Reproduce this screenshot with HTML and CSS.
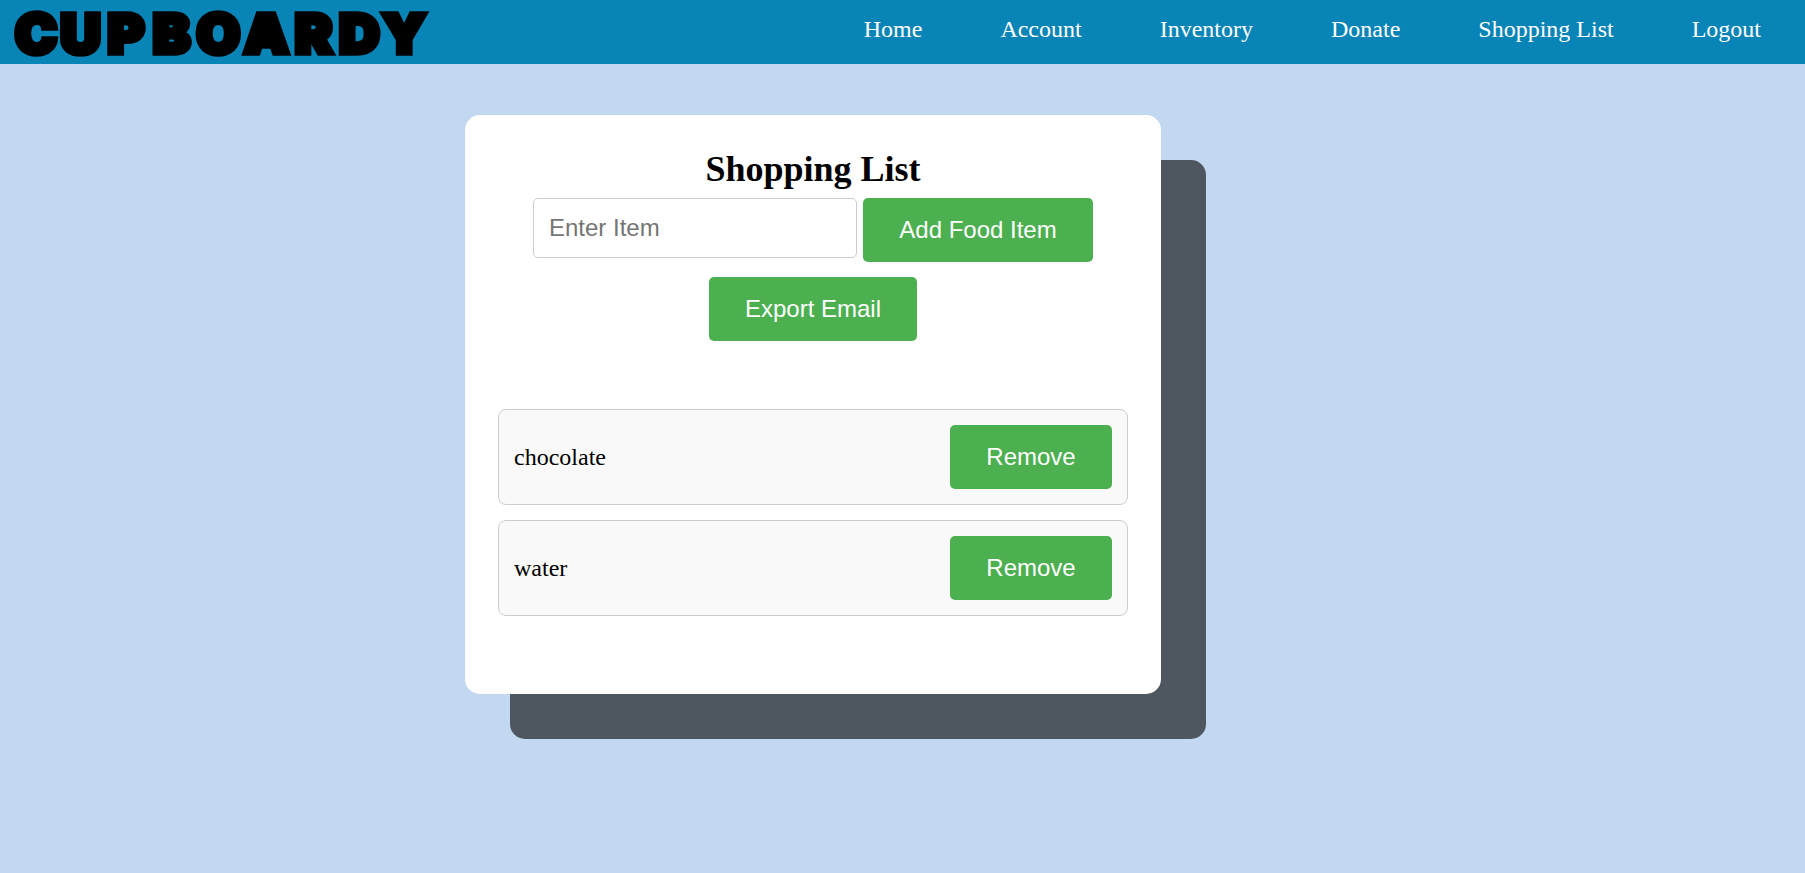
FILE: index.html
```html
<!DOCTYPE html>
<html lang="en">
<head>
<meta charset="utf-8">
<title>Shopping List</title>
<link rel="stylesheet" href="styles.css">
</head>
<body>
<header class="navbar">
  <svg class="logo" viewBox="0 0 440 64" width="440" height="64">
    <text class="logo-text" transform="scale(1.04 1)" y="53" x="34.7 77.5 121 165 210 256 301.5 345.5 388.5">CUPBOARDY</text>
  </svg>
  <nav class="links">
    <a>Home</a>
    <a>Account</a>
    <a>Inventory</a>
    <a>Donate</a>
    <a>Shopping List</a>
    <a>Logout</a>
  </nav>
</header>
<main class="card">
  <h1 class="title">Shopping List</h1>
  <form class="add-form">
    <input class="item-input" type="text" placeholder="Enter Item">
    <button class="btn btn-add" type="button">Add Food Item</button>
  </form>
  <button class="btn btn-export" type="button">Export Email</button>
  <ul class="items">
    <li class="item"><span>chocolate</span><button class="btn btn-remove" type="button">Remove</button></li>
    <li class="item"><span>water</span><button class="btn btn-remove" type="button">Remove</button></li>
  </ul>
</main>
</body>
</html>
```
FILE: styles.css
```css
* {
  box-sizing: border-box;
}

html,
body {
  height: 100%;
}

body {
  margin: 0;
  overflow: hidden;
  background: #c2d8f0;
  color: #000;
  font-family: "Liberation Serif", "Times New Roman", serif;
  font-size: 24px;
}

.navbar {
  display: flex;
  justify-content: space-between;
  height: 64px;
  padding-right: 44px;
  background: #0884b7;
}

.logo {
  display: block;
  overflow: visible;
}

.logo-text {
  font-family: Inter, sans-serif;
  font-size: 54px;
  font-weight: 900;
  text-anchor: middle;
  fill: #000;
  stroke: #000;
  stroke-width: 5.6px;
}

.links {
  display: flex;
  gap: 78px;
  padding-top: 15px;
  color: #fff;
  line-height: 28px;
}

.card {
  display: flex;
  flex-direction: column;
  align-items: center;
  width: 696px;
  height: 579px;
  margin: 51px 0 0 465px;
  padding: 34px 33px 33px;
  border-radius: 15px;
  background: #fff;
  box-shadow: 45px 45px 0 rgba(0, 0, 0, 0.6);
}

.title {
  margin: 0 0 8px;
  font-size: 36px;
  line-height: 41px;
}

.add-form {
  display: flex;
  align-items: flex-start;
  gap: 6px;
  margin-bottom: 15px;
}

.item-input {
  width: 324px;
  height: 60px;
  padding: 0 15px;
  border: 1px solid #ccc;
  border-radius: 5px;
  background: #fff;
  font: 24px "Liberation Sans", Arial, sans-serif;
}

.item-input::placeholder {
  color: #757575;
}

.btn {
  height: 64px;
  padding: 0;
  border: 0;
  border-radius: 5px;
  background: #4caf50;
  color: #fff;
  font: 24px "Liberation Sans", Arial, sans-serif;
}

.btn-add {
  width: 230px;
}

.btn-export {
  width: 208px;
}

.btn-remove {
  width: 162px;
}

.items {
  display: flex;
  flex-direction: column;
  gap: 15px;
  width: 100%;
  margin: 68px 0 0;
  padding: 0;
  list-style: none;
}

.item {
  display: flex;
  align-items: center;
  justify-content: space-between;
  height: 96px;
  padding: 0 15px;
  border: 1px solid #ccc;
  border-radius: 8px;
  background: #f9f9f9;
}
```
